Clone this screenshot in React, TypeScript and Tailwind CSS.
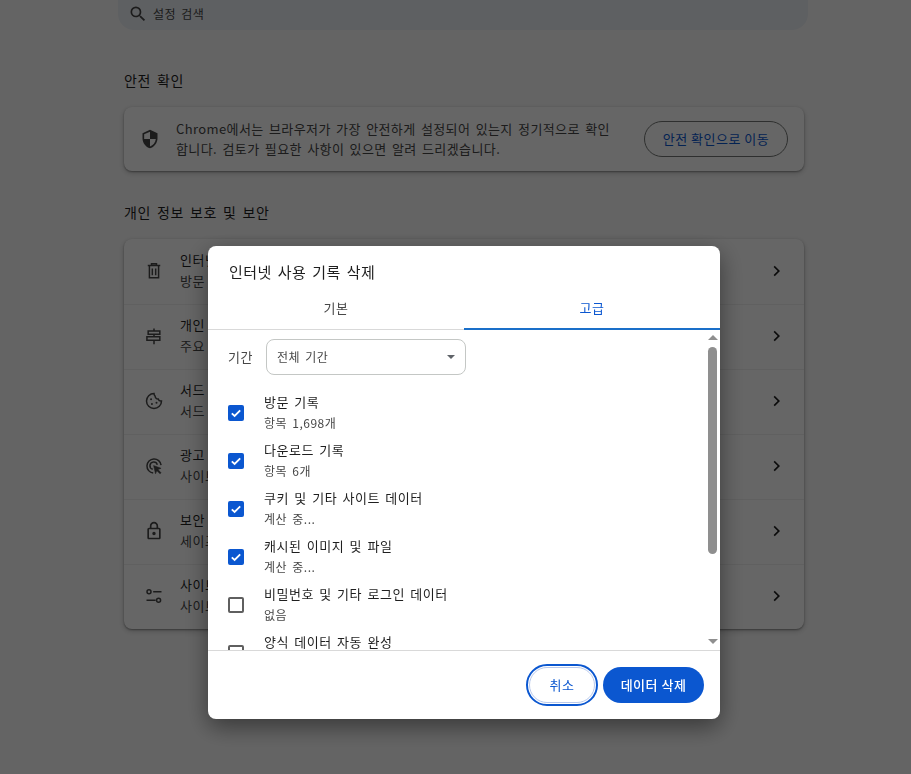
import React from "react";

const P = ({ d, className = "" }: { d: string; className?: string }) => (
  <svg viewBox="0 0 24 24" className={className} fill="currentColor"><path d={d} /></svg>
);

const IconTrash = () => (
  <svg viewBox="0 0 24 24" className="w-5 h-5 text-[#474747]" fill="none" stroke="currentColor" strokeWidth="1.8">
    <path d="M4.5 5.5h15M9 5.5V3.4h6v2.1M6.500 5.500V20.200h11V5.500M10 9v8M14 9v8" />
  </svg>
);
const IconGuide = () => (
  <svg viewBox="0 0 24 24" className="w-5 h-5 text-[#474747]" fill="none" stroke="currentColor" strokeWidth="1.8">
    <path d="M12 3v3M12 10v3M12 17v5M5 6h14v4H5zM3.500 13h15.500v4H3.500z" />
  </svg>
);
const IconCookie = () => (
  <svg viewBox="0 0 24 24" className="w-5 h-5 text-[#474747]" fill="none" stroke="currentColor" strokeWidth="1.8">
    <path d="M12 3a9 9 0 1 0 9 9c-2 .3-3.400-.6-3.900-2.400C15 9.800 13.400 8.300 13.300 6.100 12.500 5.500 12 4.300 12 3z" />
    <circle cx="8.500" cy="10" r="1.200" fill="currentColor" stroke="none" />
    <circle cx="15" cy="14" r="1.200" fill="currentColor" stroke="none" />
    <circle cx="9.500" cy="15.500" r="1.200" fill="currentColor" stroke="none" />
  </svg>
);
const IconAds = () => (
  <svg viewBox="0 0 24 24" className="w-5 h-5 text-[#474747]" fill="none" stroke="currentColor" strokeWidth="1.8">
    <path d="M11 20.500A8.500 8.500 0 1 1 20.500 11" />
    <path d="M10.500 16A4.500 4.500 0 1 1 16 10.500" />
    <path d="M11.500 11.500l9 3.200-3.700 1.600 3.700 3.900-1.200 1.200-3.900-3.700-1.600 3.700z" fill="currentColor" strokeWidth="0.6" />
  </svg>
);
const IconTune = () => (
  <svg viewBox="0 0 24 24" className="w-5 h-5 text-[#474747]" fill="none" stroke="currentColor" strokeWidth="1.8">
    <circle cx="6" cy="7" r="2.400" />
    <circle cx="17.500" cy="17" r="2.400" />
    <path d="M11 7h10M3 17h11" />
  </svg>
);

const rows = [
  { icon: <IconTrash />, t: "인터넷 사용 기록 삭제", s: "방문 기록, 쿠키, 캐시 등을 삭제합니다." },
  { icon: <IconGuide />, t: "개인 정보 보호 가이드", s: "주요 개인 정보 보호 및 보안 설정을 검토합니다." },
  { icon: <IconCookie />, t: "서드 파티 쿠키", s: "서드 파티 쿠키가 시크릿 모드에서 차단됩니다." },
  { icon: <IconAds />, t: "광고 개인 정보 보호", s: "사이트에서 광고를 표시하는 데 사용하는 정보를 맞춤설정합니다." },
  { icon: <P className="w-5 h-5 text-[#474747]" d="M18 8h-1V6c0-2.760-2.240-5-5-5S7 3.240 7 6v2H6c-1.100 0-2 .9-2 2v10c0 1.100.9 2 2 2h12c1.100 0 2-.9 2-2V10c0-1.100-.9-2-2-2zM9 6c0-1.660 1.340-3 3-3s3 1.340 3 3v2H9V6zm9 14H6V10h12v10zm-6-3c1.100 0 2-.9 2-2s-.9-2-2-2-2 .9-2 2 .9 2 2 2z" />, t: "보안", s: "세이프 브라우징 및 기타 보안 설정" },
  { icon: <IconTune />, t: "사이트 설정", s: "사이트에서 사용하고 표시할 수 있는 정보 제어" },
];

const items = [
  { t: "방문 기록", s: "항목 1,698개", c: true },
  { t: "다운로드 기록", s: "항목 6개", c: true },
  { t: "쿠키 및 기타 사이트 데이터", s: "계산 중...", c: true },
  { t: "캐시된 이미지 및 파일", s: "계산 중...", c: true },
  { t: "비밀번호 및 기타 로그인 데이터", s: "없음", c: false },
  { t: "양식 데이터 자동 완성", s: "없음", c: false },
];

export default function App() {
  return (
    <div className="relative h-[774px] overflow-hidden bg-[#fbfbfb] text-[13px] tracking-[0.5px] [word-spacing:2px] text-[#1f1f1f] font-['Noto_Sans_CJK_KR','Liberation_Sans',sans-serif]">
      <div className="ml-[124px] w-[680px] -mt-[2px]">
        <div className="-ml-[6px] w-[690px] h-[32px] rounded-b-[16px] bg-[#ecf0f5] flex items-center pl-[10px] gap-[5px] text-[#474747]">
          <P className="w-[20px] h-[20px]" d="M15.500 14h-.79l-.28-.27A6.471 6.471 0 0 0 16 9.500 6.500 6.500 0 1 0 9.500 16c1.610 0 3.090-.59 4.230-1.570l.27.28v.79l5 4.990L20.490 19l-4.990-5zm-6 0C7.010 14 5 11.990 5 9.500S7.010 5 9.500 5 14 7.010 14 9.500 11.990 14 9.500 14z" />
          <span className="text-[12px]">설정 검색</span>
        </div>

        <h2 className="mt-[39px] h-[22px] leading-[22px] text-[14px] font-normal tracking-[0.7px]">안전 확인</h2>
        <div className="mt-[16px] h-[64px] rounded-[8px] bg-white shadow-[0_1px_2px_rgba(0,0,0,0.35),0_2px_6px_rgba(0,0,0,0.2)] flex items-center pl-[16px] pr-[16px]">
          <P className="w-5 h-5 text-[#474747]" d="M12 1L3 5v6c0 5.550 3.840 10.740 9 12 5.160-1.260 9-6.450 9-12V5l-9-4zm0 10.990h7c-.53 4.120-3.280 7.790-7 8.940V12H5V6.300l7-3.110v8.800z" />
          <p className="ml-[16px] w-[445px] text-[13px] tracking-[0.4px] leading-[20px] text-[#474747]">
            Chrome에서는 브라우저가 가장 안전하게 설정되어 있는지 정기적으로 확인합니다. 검토가 필요한 사항이 있으면 알려 드리겠습니다.
          </p>
          <button className="ml-auto h-[36px] w-[144px] rounded-full border border-[#747775] text-[13px] text-[#0b57d0]">안전 확인으로 이동</button>
        </div>

        <h2 className="mt-[30px] h-[22px] leading-[22px] text-[14px] font-normal tracking-[0.7px]">개인 정보 보호 및 보안</h2>
        <div className="mt-[16px] rounded-[8px] bg-white shadow-[0_1px_2px_rgba(0,0,0,0.35),0_2px_6px_rgba(0,0,0,0.2)]">
          {rows.map((r, i) => (
            <div key={i} className={`h-[65px] flex items-center pl-[20px] pr-[17px] pb-[2px] border-t ${i ? "border-[#f0f0f0]" : "border-transparent"}`}>
              {r.icon}
              <div className="ml-[16px] leading-[21px] -mt-[2px] whitespace-nowrap">
                <div>{r.t}</div>
                <div className="text-[#474747]">{r.s}</div>
              </div>
              <svg viewBox="0 0 24 24" className="ml-auto w-5 h-5 text-[#1f1f1f]" fill="currentColor"><path d="M9.300 5.700L15.600 12l-6.300 6.300-1.400-1.400 4.900-4.900-4.900-4.900z" /></svg>
            </div>
          ))}
        </div>
      </div>

      <div className="fixed inset-0 bg-black/60" />

      <div className="fixed left-[208px] top-[246px] w-[512px] h-[473px] rounded-[8px] bg-white overflow-hidden flex flex-col shadow-[0_8px_24px_rgba(0,0,0,0.45)]">
        <div className="h-[50px] pl-[21px] pt-[14px] text-[15px] leading-[24px] text-[#1f1f1f]">인터넷 사용 기록 삭제</div>
        <div className="h-[34px] flex border-b border-[#d9d9d9] text-[13px]">
          <div className="flex-1 flex items-start pt-[2px] justify-center text-[#474747]">기본</div>
          <div className="flex-1 flex items-start pt-[2px] justify-center text-[#0b57d0] border-b-2 border-[#1a6fc9] -mb-[1px]">고급</div>
        </div>
        <div className="h-[320px] flex overflow-hidden">
          <div className="flex-1 min-w-0 overflow-hidden pl-[20px]">
            <div className="mt-[9px] flex items-center h-[36px]">
              <span className="w-[38px] text-[#474747]">기간</span>
              <div className="w-[200px] h-[36px] rounded-[8px] border border-[#c4c7c5] flex items-center pl-[10px] pr-[10px] text-[12px] text-[#474747]">
                전체 기간
                <span className="ml-auto w-0 h-0 border-l-[4px] border-r-[4px] border-t-[4px] border-l-transparent border-r-transparent border-t-[#5f6368]" />
              </div>
            </div>
            <div className="mt-[14px]">
              {items.map((it, i) => (
                <div key={i} className="h-[48px] flex items-center">
                  {it.c ? (
                    <span className="w-[16px] h-[16px] rounded-[2px] bg-[#0b57d0] flex items-center justify-center">
                      <svg viewBox="0 0 16 16" className="w-[16px] h-[16px]" fill="none" stroke="white" strokeWidth="1.800"><path d="M3.800 8.300l2.800 2.700 5.600-5.700" /></svg>
                    </span>
                  ) : (
                    <span className="w-[16px] h-[16px] rounded-[2px] border-2 border-[#5f5f5f]" />
                  )}
                  <div className="ml-[20px] leading-[21px] -mt-[3px]">
                    <div className="text-[#1f1f1f]">{it.t}</div>
                    <div className="text-[#474747] text-[12px]">{it.s}</div>
                  </div>
                </div>
              ))}
            </div>
          </div>
          <div className="w-[15px] shrink-0 flex flex-col items-center pl-[3px] pr-[3px] pt-[5px] pb-[6px]">
            <span className="w-0 h-0 border-l-[5px] border-r-[5px] border-b-[5px] border-l-transparent border-r-transparent border-b-[#8f8f8f]" />
            <span className="mt-[7px] w-[9px] h-[207px] rounded-full bg-[#8f8f8f]" />
            <span className="mt-auto w-0 h-0 border-l-[5px] border-r-[5px] border-t-[5px] border-l-transparent border-r-transparent border-t-[#8f8f8f]" />
          </div>
        </div>
        <div className="flex-1 border-t border-[#d9d9d9] flex items-center justify-end pr-[16px] gap-[8px]">
          <button className="w-[66px] h-[36px] rounded-full border border-[#b9c9ec] outline-2 outline-offset-1 outline-[#0b57d0] text-[#0b57d0] text-[13px]">취소</button>
          <button className="w-[101px] h-[36px] rounded-full bg-[#0b57d0] text-white text-[13px] font-medium">데이터 삭제</button>
        </div>
      </div>
    </div>
  );
}
